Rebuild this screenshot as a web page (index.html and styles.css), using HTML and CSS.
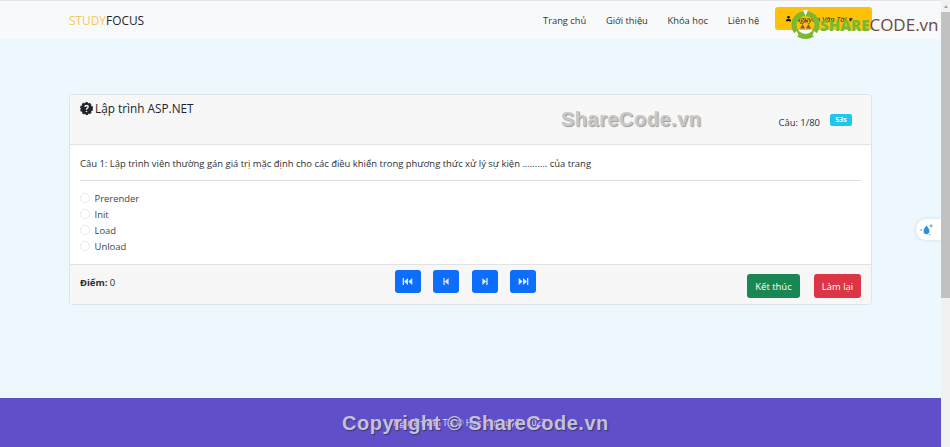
FILE: index.html
```html
<!DOCTYPE html>
<html lang="vi">
<head>
  <meta charset="UTF-8"/>
  <meta name="viewport" content="width=device-width,initial-scale=1"/>
  <title>Lập trình ASP.NET</title>
  <link rel="stylesheet" href="styles.css">
</head>
<body>
  <div class="page">
    <div class="main">
      <nav class="navbar">
        <a class="brand"><span class="brand-study">STUDY</span>FOCUS</a>
        <div class="nav-links">
          <a>Trang chủ</a>
          <a>Giới thiệu</a>
          <a>Khóa học</a>
          <a>Liên hệ</a>
          <button class="user-btn">
            <svg width="7" height="7" viewBox="0 0 16 16"><path d="M3 14s-1 0-1-1 1-4 6-4 6 3 6 4-1 1-1 1H3zm5-6a3 3 0 1 0 0-6 3 3 0 0 0 0 6z"/></svg>
            Nguyễn Văn Tài ▾
          </button>
        </div>
      </nav>

      <section class="content">
        <div class="card">
          <div class="card-header">
            <h1>
              <svg class="q-icon" width="13" height="13" viewBox="0 0 16 16"><circle cx="8" cy="8" r="7" fill="#212529"/><circle cx="8" cy="8" r="7.300" fill="none" stroke="#212529" stroke-width="1.400" stroke-dasharray="3 1.600"/><path fill="#f7f7f7" d="M5.300 6.200h1.700c.1-.7.5-1.100 1.100-1.100.6 0 1 .4 1 .9 0 .5-.2.8-.8 1.200-.8.500-1.100 1.100-1.100 1.900v.4h1.600v-.3c0-.6.2-.8.900-1.300.8-.6 1.200-1.200 1.200-2.100 0-1.400-1.100-2.300-2.700-2.300-1.800 0-2.800 1-2.900 2.700zM8 12.700a1 1 0 1 0 0-2 1 1 0 0 0 0 2z"/></svg>
              Lập trình ASP.NET
            </h1>
            <div class="progress">Câu: 1/80 <span class="badge">53s</span></div>
          </div>
          <div class="card-body">
            <p class="question">Câu 1: Lập trình viên thường gán giá trị mặc định cho các điều khiển trong phương thức xử lý sự kiện .......... của trang</p>
            <hr>
            <label class="option"><span class="radio"></span>Prerender</label>
            <label class="option"><span class="radio"></span>Init</label>
            <label class="option"><span class="radio"></span>Load</label>
            <label class="option"><span class="radio"></span>Unload</label>
          </div>
          <div class="card-footer">
            <div class="score"><b>Điểm:</b> 0</div>
            <div class="pager">
              <button class="nav-btn"><svg width="11" height="7" viewBox="0 0 11 8"><path d="M0 0h1.500v8H0zM6 0v8L1.500 4zM11 0v8L6.500 4z"/></svg></button>
              <button class="nav-btn"><svg width="6" height="7" viewBox="0 0 6 8"><path d="M0 0h1.500v8H0zM6 0v8L1.500 4z"/></svg></button>
              <button class="nav-btn"><svg width="6" height="7" viewBox="0 0 6 8"><path d="M6 0H4.500v8H6zM0 0v8l4.500-4z"/></svg></button>
              <button class="nav-btn"><svg width="11" height="7" viewBox="0 0 11 8"><path d="M11 0H9.500v8H11zM5 0v8l4.500-4zM0 0v8l4.500-4z"/></svg></button>
            </div>
            <div class="actions">
              <button class="btn btn-green">Kết thúc</button>
              <button class="btn btn-red">Làm lại</button>
            </div>
          </div>
        </div>
      </section>

      <footer class="footer">Nguyễn Văn Tài © Học trực tuyến 2022</footer>

      <!-- floating widget + watermarks sit over the page -->
      <div class="float-tab">
        <svg width="15" height="14" viewBox="0 0 18 16"><path fill="#2f8fdc" d="M9 2.500c2 2.800 3.500 4.500 3.500 6.700A3.500 3.500 0 0 1 9 13a3.500 3.500 0 0 1-3.500-3.800C5.500 7 7 5.300 9 2.500z"/><circle cx="2.500" cy="8" r="1" fill="#2f8fdc"/><path fill="#2f8fdc" d="M14 1h1v1.500h1.500v1H15V5h-1V3.500h-1.500v-1H14z"/><circle cx="13" cy="13.500" r=".8" fill="#2f8fdc"/></svg>
      </div>
      <div class="wm-logo">
        <svg width="30" height="30" viewBox="0 0 30 30"><circle cx="14.500" cy="15" r="11.500" fill="none" stroke="#7cb82f" stroke-width="5"/><path fill="#fff" d="M12 0h5l-2.500 6zM1 25l5-4 1.500 5zM28 25l-5-4-1.500 5z"/><path fill="#7a5c48" d="M14.500 8l2.500 4.500h-5zM9 18.500l2.500-4.500 2.500 4.500zM20 18.500h-5l2.500-4.500z"/></svg>
        <span class="wm-share">SHARE</span><span class="wm-code">CODE.vn</span>
      </div>
      <div class="wm-text wm-center">ShareCode.vn</div>
      <div class="wm-text wm-foot">Copyright © ShareCode.vn</div>
    </div>

    <div class="scrollbar">
      <div class="scroll-arrow"></div>
      <div class="scroll-thumb"></div>
    </div>
  </div>
</body>
</html>
```

FILE: styles.css
```css
* { box-sizing: border-box; margin: 0; padding: 0 }
html, body { height: 100%; overflow: hidden }
body {
  font-family: "Open Sans", "Noto Sans", sans-serif;
  font-size: 9.450px;
  color: #2b2f33;
  background: #ecf8fe;
}
button { font-family: inherit; border: none }

.page { display: flex; height: 447px }
.main {
  position: relative;
  flex: 1;
  display: flex;
  flex-direction: column;
  overflow: hidden;
}

/* navbar */
.navbar {
  height: 39px;
  flex: none;
  display: flex;
  align-items: center;
  justify-content: space-between;
  padding: 0 69px;
  background: #f8f9fa;
  border-top: 1px solid #e3e5e8;
}
.brand { font-size: 11.900px; color: #212529 }
.brand-study { color: #f4c862 }
.nav-links { display: flex; align-items: center; gap: 19.800px; color: #333; font-size: 9.300px }
.user-btn {
  display: flex;
  align-items: center;
  gap: 3px;
  height: 23px;
  width: 97px;
  padding-left: 10px;
  border-radius: 3px;
  background: #ffc107;
  font-size: 7.500px;
  font-style: italic;
  color: #212529;
  margin: -3px 0 0 -4px;
}

/* quiz card */
.content { flex: 1; padding: 55px 69px 0 69px }
.card {
  background: #fff;
  border: 1px solid #dfe3e6;
  border-radius: 4px;
  overflow: hidden;
}
.card-header {
  height: 50px;
  display: flex;
  justify-content: space-between;
  padding: 5px 19px 0 10px;
  background: #f7f7f7;
  border-bottom: 1px solid #e2e2e2;
}
h1 {
  display: flex;
  align-items: center;
  gap: 2px;
  height: 16px;
  font-size: 11.800px;
  font-weight: 500;
  color: #212529;
}
.progress { margin-top: 14px; display: flex; align-items: center; height: 16px; gap: 10px }
.badge {
  background: #1cc8ee;
  color: #fff;
  font-size: 7px;
  font-weight: 700;
  width: 22px;
  text-align: center;
  border-radius: 2px;
  height: 12px;
  line-height: 12px;
  margin-top: -4px;
}
.card-body { height: 119px; padding: 12px 10px 0 }
.question { height: 14px; line-height: 14px }
hr { border: none; border-top: 1px solid #e0e0e0; margin: 9px 0 9px }
.option { display: flex; align-items: center; gap: 4.500px; height: 16px; color: #444 }
.radio {
  width: 10px;
  height: 10px;
  border: 1px solid #e8eaec;
  border-radius: 50%;
  background: #fff;
}
.card-footer {
  height: 40px;
  display: flex;
  align-items: center;
  padding: 0 10px;
  background: #f7f7f7;
  border-top: 1px solid #e2e2e2;
  position: relative;
}
.score { width: 314.500px; margin-top: -5px }
.score b { font-weight: 700 }
.pager { display: flex; gap: 12.500px; margin-top: -6px }
.nav-btn {
  width: 26px;
  height: 23px;
  border-radius: 3px;
  background: #0d6efd;
  display: flex;
  align-items: center;
  justify-content: center;
}
.nav-btn svg { fill: #dce9ff }
.actions { margin-left: auto; display: flex; gap: 14px; margin-top: 3px }
.btn {
  height: 24px;
  border-radius: 3px;
  color: #fff;
  font-size: 9.450px;
}
.btn-green { width: 53px; background: #198754 }
.btn-red { width: 47px; background: #dc3545 }

/* footer */
.footer {
  height: 49px;
  flex: none;
  display: flex;
  align-items: center;
  justify-content: center;
  padding-right: 2px;
  background: #5f4fc8;
  color: #e8e4f8;
  font-size: 8.500px;
}

/* overlays */
.float-tab {
  position: absolute;
  right: 0;
  top: 219px;
  width: 25px;
  height: 21px;
  display: flex;
  align-items: center;
  padding-left: 3px;
  background: #fff;
  border-radius: 10px 0 0 10px;
  box-shadow: 0 0 4px rgba(0,0,0,.12);
}
.wm-logo {
  position: absolute;
  left: 791px;
  top: 10px;
  display: flex;
  align-items: center;
  font-size: 15px;
  line-height: 30px;
  font-family: "Open Sans", sans-serif;
  white-space: nowrap;
}
.wm-share { color: #7cb82f; font-weight: 800; margin-left: -1px }
.wm-code { color: #6a4a3a; font-size: 17px }
.wm-text {
  position: absolute;
  font-family: "Liberation Sans", Arial, sans-serif;
  font-weight: 700;
  font-size: 20px;
  letter-spacing: .5px;
  white-space: nowrap;
}
.wm-center { left: 561px; top: 108px; color: #c8c8c8; text-shadow: 1px 1px 1px #999 }
.wm-foot { left: 342px; top: 412px; color: #c4c0dc; text-shadow: 1px 1px 1px #3a3470 }

/* fake scrollbar */
.scrollbar { width: 9px; flex: none; background: #f1f1f1 }
.scroll-arrow {
  height: 12px;
  padding-top: 5px;
}
.scroll-arrow::before {
  content: "";
  display: block;
  width: 0;
  margin: 0 auto;
  border: 2.500px solid transparent;
  border-top: 0;
  border-bottom: 3px solid #a3a3a3;
}
.scroll-thumb { height: 286px; background: #c1c1c1 }
```
